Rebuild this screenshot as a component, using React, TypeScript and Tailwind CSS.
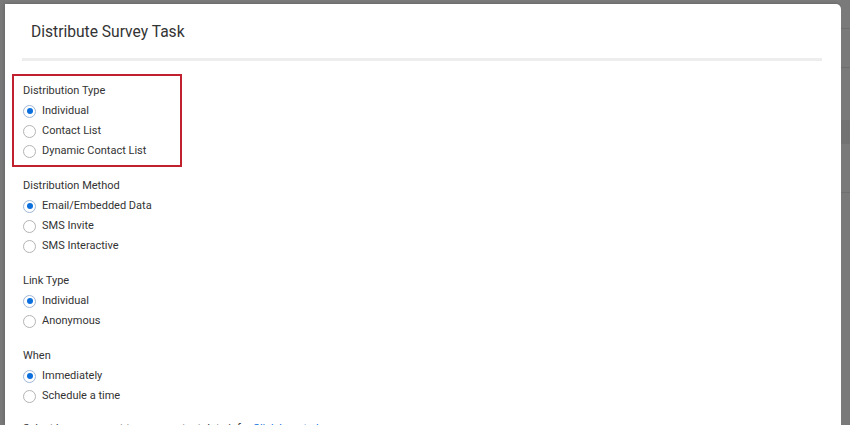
import React from "react";

const font = { fontFamily: 'Roboto, "Liberation Sans", Arial, sans-serif' };

function Radio({ label, checked }: { label: string; checked?: boolean }) {
  return (
    <div className="flex h-[20px] items-center">
      <span
        className={
          "flex h-[13px] w-[13px] items-center justify-center rounded-full border bg-white " +
          (checked ? "border-[#9fb7d6]" : "border-[#b4b4b4]")
        }
      >
        {checked && <span className="h-[6px] w-[6px] rounded-full bg-[#0b6fde]" />}
      </span>
      <span className="ml-[6px] pt-[1px] text-[11px] text-[#333333]">{label}</span>
    </div>
  );
}

function Group({ title, options }: { title: string; options: string[] }) {
  return (
    <div>
      <div className="flex h-[20px] items-center pt-[1px] text-[11px] text-[#333333]">{title}</div>
      {options.map((o, i) => (
        <Radio key={o} label={o} checked={i === 0} />
      ))}
    </div>
  );
}

export default function App() {
  return (
    <div className="h-[425px] w-[850px] overflow-hidden bg-[#7c7c7c]" style={font}>
      <div className="flex h-full">
        <div className="w-[5px] shrink-0 bg-[#7a7a7a]" />
        <div className="mt-[4px] w-[836px] shrink-0 rounded-tr-[5px] bg-white shadow-[0_0_4px_rgba(0,0,0,0.25)]">
          <div className="flex h-[54px] items-center pl-[26px] pt-[4px]">
            <span className="text-[15.6px] text-[#333333]">Distribute Survey Task</span>
          </div>
          <div className="ml-[17px] mr-[19px] h-[3px] bg-[#ededed]" />
          <div className="pl-[7px] pt-[13px]">
            <div className="w-[170px] border-2 border-[#c1202f] pb-[4px] pl-[9px] pt-[5px]">
              <Group title="Distribution Type" options={["Individual", "Contact List", "Dynamic Contact List"]} />
            </div>
            <div className="flex flex-col gap-[15px] pl-[11px] pt-[9px]">
              <Group title="Distribution Method" options={["Email/Embedded Data", "SMS Invite", "SMS Interactive"]} />
              <Group title="Link Type" options={["Individual", "Anonymous"]} />
              <Group title="When" options={["Immediately", "Schedule a time"]} />
              <div className="-mt-[2px] flex h-[20px] items-center whitespace-nowrap pt-[1px] text-[11px] text-[#333333]">
                Select how you want to save contact data info.&nbsp;
                <span className="text-[#0b6fde]">Click here to learn more.</span>
              </div>
            </div>
          </div>
        </div>
        <div className="flex flex-1 flex-col bg-[#7a7a7a]">
          <div className="h-[28px]" />
          <div className="h-[1px] bg-[#6e6e6e]" />
          <div className="h-[38px]" />
          <div className="h-[1px] bg-[#6e6e6e]" />
          <div className="h-[52px]" />
          <div className="h-[24px] bg-[#727272]" />
          <div className="h-[48px]" />
          <div className="h-[1px] bg-[#707070]" />
        </div>
      </div>
    </div>
  );
}
